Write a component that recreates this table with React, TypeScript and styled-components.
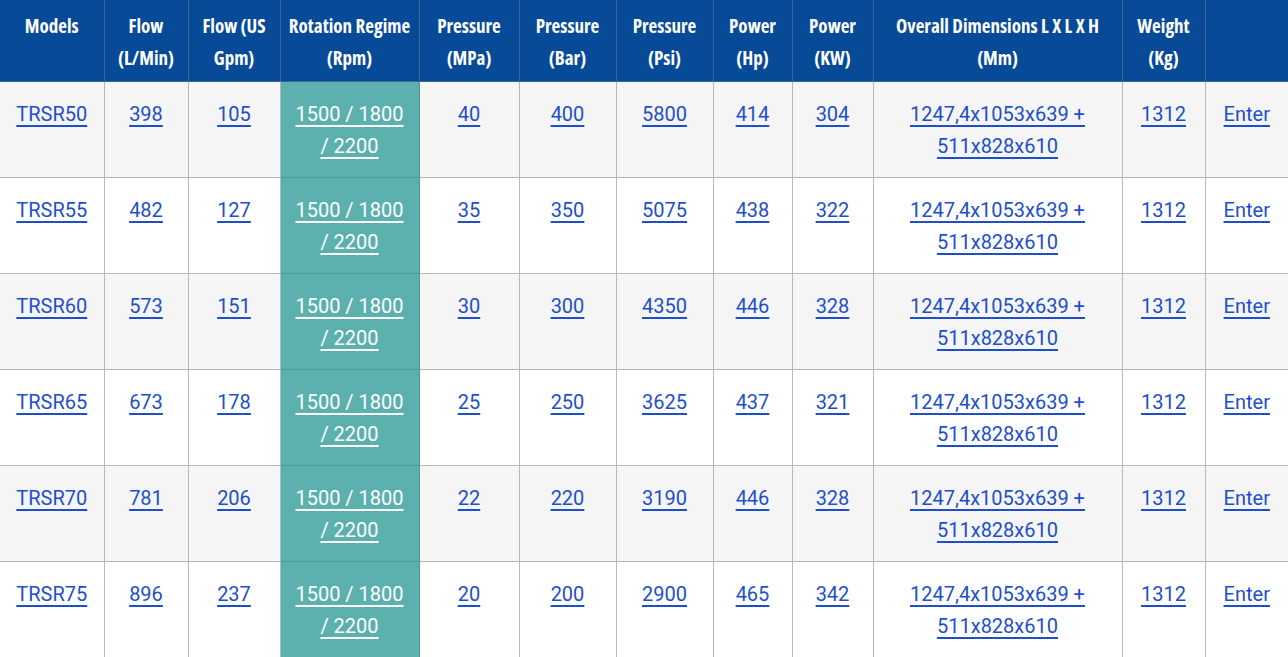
import styled, { createGlobalStyle } from "styled-components";

const GlobalStyle = createGlobalStyle`
  html, body {
    margin: 0;
    padding: 0;
    background: #ffffff;
  }
  body {
    font-family: Roboto, "Liberation Sans", sans-serif;
  }
`;

const COLUMN_WIDTHS = [104, 84, 92, 139, 100, 97, 97, 79, 81, 249, 83, 83];

const HEADERS = [
  "Models",
  "Flow (L/Min)",
  "Flow (US Gpm)",
  "Rotation Regime (Rpm)",
  "Pressure (MPa)",
  "Pressure (Bar)",
  "Pressure (Psi)",
  "Power (Hp)",
  "Power (KW)",
  "Overall Dimensions L X L X H (Mm)",
  "Weight (Kg)",
  "",
];

type Model = {
  name: string;
  flow: string;
  gpm: string;
  mpa: string;
  bar: string;
  psi: string;
  hp: string;
  kw: string;
};

const MODELS: Model[] = [
  { name: "TRSR50", flow: "398", gpm: "105", mpa: "40", bar: "400", psi: "5800", hp: "414", kw: "304" },
  { name: "TRSR55", flow: "482", gpm: "127", mpa: "35", bar: "350", psi: "5075", hp: "438", kw: "322" },
  { name: "TRSR60", flow: "573", gpm: "151", mpa: "30", bar: "300", psi: "4350", hp: "446", kw: "328" },
  { name: "TRSR65", flow: "673", gpm: "178", mpa: "25", bar: "250", psi: "3625", hp: "437", kw: "321" },
  { name: "TRSR70", flow: "781", gpm: "206", mpa: "22", bar: "220", psi: "3190", hp: "446", kw: "328" },
  { name: "TRSR75", flow: "896", gpm: "237", mpa: "20", bar: "200", psi: "2900", hp: "465", kw: "342" },
];

const Table = styled.table`
  width: 1288px;
  table-layout: fixed;
  border-collapse: collapse;
  border-spacing: 0;
`;

const HeadCell = styled.th`
  background: #074a98;
  color: #ffffff;
  font-family: "Open Sans", "DejaVu Sans", sans-serif;
  font-stretch: 75%;
  font-weight: 700;
  font-size: 19px;
  line-height: 32px;
  text-align: center;
  vertical-align: top;
  height: 81px;
  padding: 10px 6px 0;
  box-sizing: border-box;
  border-left: 1px solid #3d6594;
  border-right: 1px solid #3d6594;
  border-top: none;
  border-bottom: 1px solid #3d6594;

  &:first-child {
    border-left: none;
  }
  &:last-child {
    border-right: none;
  }
`;

const Row = styled.tr<{ $striped: boolean }>`
  background: ${({ $striped }) => ($striped ? "#f5f5f5" : "#ffffff")};
`;

const Cell = styled.td<{ $highlight?: boolean }>`
  background: ${({ $highlight }) => ($highlight ? "#5cb0ae" : "transparent")};
  text-align: center;
  vertical-align: top;
  height: 96px;
  padding: 16px 12px 0;
  box-sizing: border-box;
  border: 1px solid ${({ $highlight }) => ($highlight ? "#4f9896" : "#b8b8b8")};
  font-size: 20px;
  line-height: 32px;

  &:first-child {
    border-left: none;
  }
  &:last-child {
    border-right: none;
  }
`;

const CellLink = styled.a<{ $light?: boolean }>`
  color: ${({ $light }) => ($light ? "#ffffff" : "#1d4fcc")};
  text-decoration: underline;
  text-decoration-thickness: 2px;
  text-underline-offset: 4px;
  cursor: pointer;
`;

export default function App() {
  return (
    <>
      <GlobalStyle />
      <Table>
        <colgroup>
          {COLUMN_WIDTHS.map((w, i) => (
            <col key={i} style={{ width: w }} />
          ))}
        </colgroup>
        <thead>
          <tr>
            {HEADERS.map((h, i) => (
              <HeadCell key={i}>{h}</HeadCell>
            ))}
          </tr>
        </thead>
        <tbody>
          {MODELS.map((m, i) => (
            <Row key={m.name} $striped={i % 2 === 0}>
              <Cell><CellLink>{m.name}</CellLink></Cell>
              <Cell><CellLink>{m.flow}</CellLink></Cell>
              <Cell><CellLink>{m.gpm}</CellLink></Cell>
              <Cell $highlight><CellLink $light>1500 / 1800 / 2200</CellLink></Cell>
              <Cell><CellLink>{m.mpa}</CellLink></Cell>
              <Cell><CellLink>{m.bar}</CellLink></Cell>
              <Cell><CellLink>{m.psi}</CellLink></Cell>
              <Cell><CellLink>{m.hp}</CellLink></Cell>
              <Cell><CellLink>{m.kw}</CellLink></Cell>
              <Cell><CellLink>1247,4x1053x639 + 511x828x610</CellLink></Cell>
              <Cell><CellLink>1312</CellLink></Cell>
              <Cell><CellLink>Enter</CellLink></Cell>
            </Row>
          ))}
        </tbody>
      </Table>
    </>
  );
}
